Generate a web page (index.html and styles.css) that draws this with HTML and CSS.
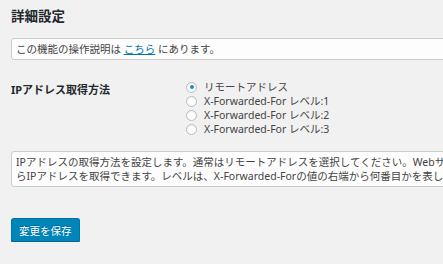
FILE: index.html
```html
<!DOCTYPE html>
<html lang="ja">
<head>
    <meta charset="UTF-8">
    <title>詳細設定</title>
    <link rel="stylesheet" href="styles.css">
</head>
<body>
    <div class="wrap">
        <h2 class="title">詳細設定</h2>

        <div class="notice">この機能の操作説明は <a href="#">こちら</a> にあります。</div>

        <div class="row">
            <div class="row-label">IPアドレス取得方法</div>
            <div class="row-field">
                <label class="choice"><input type="radio" name="ip_mode" checked> リモートアドレス</label>
                <label class="choice"><input type="radio" name="ip_mode"> X-Forwarded-For レベル:1</label>
                <label class="choice"><input type="radio" name="ip_mode"> X-Forwarded-For レベル:2</label>
                <label class="choice"><input type="radio" name="ip_mode"> X-Forwarded-For レベル:3</label>
            </div>
        </div>

        <div class="desc">IPアドレスの取得方法を設定します。通常はリモートアドレスを選択してください。Webサーバがプロキシの背後にある場合は、X-Forwarded-Forヘッダか<br>らIPアドレスを取得できます。レベルは、X-Forwarded-Forの値の右端から何番目かを表します。</div>

        <button type="submit" class="button-primary">変更を保存</button>
    </div>
</body>
</html>
```

FILE: styles.css
```css
html, body {
    margin: 0;
    overflow: hidden;
}
body {
    background: #f1f1f1;
    color: #444;
    font-family: "Noto Sans", "Noto Sans CJK JP", sans-serif;
    font-size: 10.5px;
}
.wrap {
    padding: 6px 0 0 11px;
}
.title {
    margin: 0 0 12px;
    font-size: 13.5px;
    line-height: 20px;
    font-weight: 600;
    color: #23282d;
}
.notice {
    width: 700px;
    padding: 3px 4px;
    line-height: 14px;
    background: #fdfdfd;
    border: 1px solid #ccc;
    border-radius: 3px;
    white-space: nowrap;
}
.notice a {
    color: #0073aa;
}
.row {
    display: flex;
    margin-top: 20px;
}
.row-label {
    width: 175px;
    padding-top: 3px;
    font-size: 11px;
    font-weight: bold;
    color: #23282d;
    line-height: 14px;
}
.row-field {
    display: flex;
    flex-direction: column;
}
.choice {
    display: flex;
    align-items: center;
    gap: 7px;
    height: 14px;
    line-height: 14px;
    white-space: nowrap;
}
.choice input {
    appearance: none;
    margin: 0;
    width: 11px;
    height: 11px;
    border: 1px solid #bbb;
    border-radius: 50%;
    background: #fff;
    box-shadow: inset 0 1px 2px rgba(0,0,0,0.07);
    display: flex;
    align-items: center;
    justify-content: center;
}
.choice input:checked::before {
    content: "";
    width: 4px;
    height: 4px;
    border-radius: 50%;
    background: #1e8cbe;
}
.desc {
    width: 700px;
    margin-top: 15px;
    padding: 3px 4px;
    line-height: 14px;
    background: #fdfdfd;
    border: 1px solid #ccc;
    border-radius: 3px;
    white-space: nowrap;
}
.button-primary {
    margin-top: 31px;
    height: 24px;
    padding: 0 7px;
    font-family: inherit;
    font-size: 10.5px;
    color: #fff;
    background: #0085ba;
    border: 1px solid #0073aa;
    border-bottom-color: #006799;
    border-radius: 3px;
    box-shadow: 0 1px 0 #006799;
    text-shadow: 0 -1px 1px #006799;
    cursor: pointer;
}
```
